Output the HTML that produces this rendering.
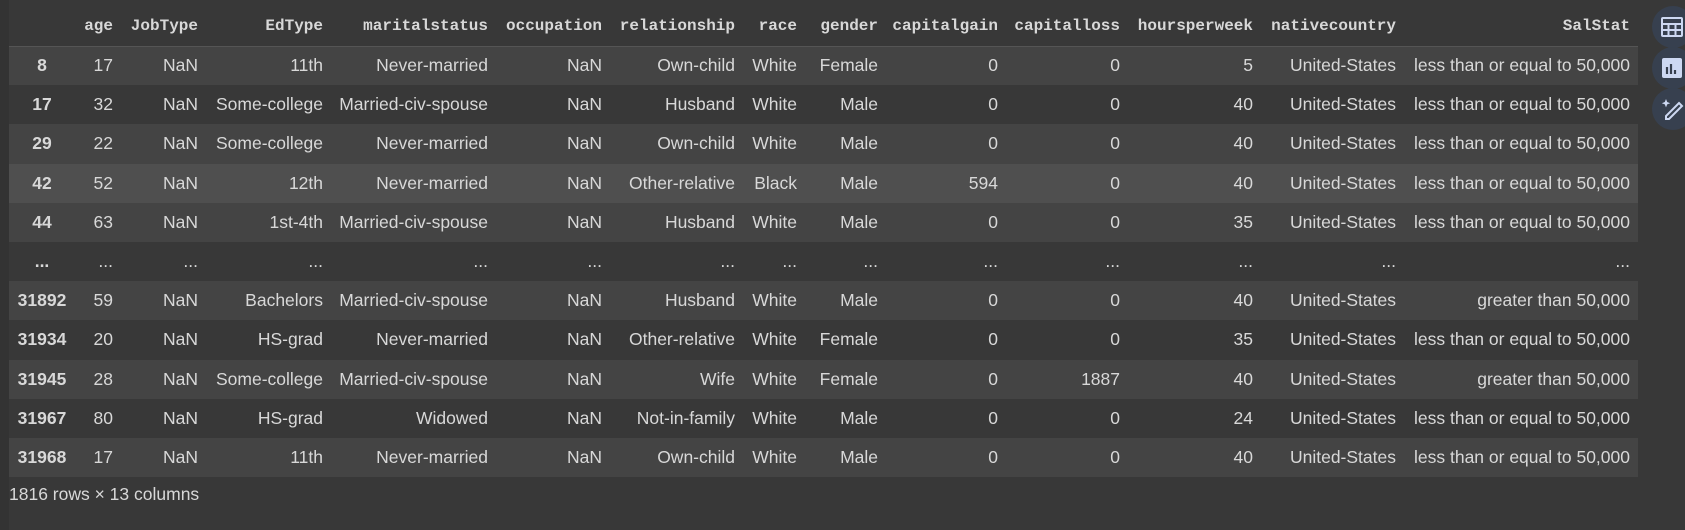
<!DOCTYPE html>
<html><head><meta charset="utf-8"><style>
html,body{margin:0;padding:0;background:#383838;width:1685px;height:530px;overflow:hidden;position:relative}
.strip{position:absolute;left:0;top:0;width:9px;height:530px;background:#333}
table{position:absolute;left:9px;top:0;border-collapse:collapse;table-layout:fixed;width:1629px;font-family:"Liberation Sans",Arial,sans-serif;font-size:17.5px;color:#d8d8d8}
th,td{padding:0 6px 0 0;text-align:right;white-space:nowrap;overflow:visible}
thead th{height:46px;box-sizing:border-box;padding-top:6px;border-bottom:1px solid #555;font-family:"Liberation Mono",monospace;font-size:16px;font-weight:bold;color:#d8d8d8;vertical-align:middle}
tbody tr{height:39.2px}
tbody th{text-align:center;padding:0;font-weight:bold}
tbody tr:nth-child(odd){background:#444}
tbody tr.hov{background:#4f4f4f}
.foot{position:absolute;left:9px;top:484px;font-family:"Liberation Sans",Arial,sans-serif;font-size:17.5px;color:#d8d8d8}
.ic{position:absolute;left:1652px;width:42px;height:42px;border-radius:50%;background:#37404f}
.ic svg{position:absolute;left:7px;top:9px}
</style></head><body>
<div class="strip"></div>
<table>
<colgroup><col style="width:66px"><col style="width:44px"><col style="width:85px"><col style="width:125px"><col style="width:165px"><col style="width:114px"><col style="width:133px"><col style="width:62px"><col style="width:81px"><col style="width:120px"><col style="width:122px"><col style="width:133px"><col style="width:143px"><col style="width:236px"></colgroup>
<thead><tr><th></th><th>age</th><th>JobType</th><th>EdType</th><th>maritalstatus</th><th>occupation</th><th>relationship</th><th>race</th><th>gender</th><th>capitalgain</th><th>capitalloss</th><th>hoursperweek</th><th>nativecountry</th><th style="padding-right:8px">SalStat</th></tr></thead>
<tbody>
<tr><th>8</th><td>17</td><td>NaN</td><td>11th</td><td>Never-married</td><td>NaN</td><td>Own-child</td><td>White</td><td>Female</td><td>0</td><td>0</td><td>5</td><td>United-States</td><td style="padding-right:8px">less than or equal to 50,000</td></tr>
<tr><th>17</th><td>32</td><td>NaN</td><td>Some-college</td><td>Married-civ-spouse</td><td>NaN</td><td>Husband</td><td>White</td><td>Male</td><td>0</td><td>0</td><td>40</td><td>United-States</td><td style="padding-right:8px">less than or equal to 50,000</td></tr>
<tr><th>29</th><td>22</td><td>NaN</td><td>Some-college</td><td>Never-married</td><td>NaN</td><td>Own-child</td><td>White</td><td>Male</td><td>0</td><td>0</td><td>40</td><td>United-States</td><td style="padding-right:8px">less than or equal to 50,000</td></tr>
<tr class="hov"><th>42</th><td>52</td><td>NaN</td><td>12th</td><td>Never-married</td><td>NaN</td><td>Other-relative</td><td>Black</td><td>Male</td><td>594</td><td>0</td><td>40</td><td>United-States</td><td style="padding-right:8px">less than or equal to 50,000</td></tr>
<tr><th>44</th><td>63</td><td>NaN</td><td>1st-4th</td><td>Married-civ-spouse</td><td>NaN</td><td>Husband</td><td>White</td><td>Male</td><td>0</td><td>0</td><td>35</td><td>United-States</td><td style="padding-right:8px">less than or equal to 50,000</td></tr>
<tr><th>...</th><td>...</td><td>...</td><td>...</td><td>...</td><td>...</td><td>...</td><td>...</td><td>...</td><td>...</td><td>...</td><td>...</td><td>...</td><td style="padding-right:8px">...</td></tr>
<tr><th>31892</th><td>59</td><td>NaN</td><td>Bachelors</td><td>Married-civ-spouse</td><td>NaN</td><td>Husband</td><td>White</td><td>Male</td><td>0</td><td>0</td><td>40</td><td>United-States</td><td style="padding-right:8px">greater than 50,000</td></tr>
<tr><th>31934</th><td>20</td><td>NaN</td><td>HS-grad</td><td>Never-married</td><td>NaN</td><td>Other-relative</td><td>White</td><td>Female</td><td>0</td><td>0</td><td>35</td><td>United-States</td><td style="padding-right:8px">less than or equal to 50,000</td></tr>
<tr><th>31945</th><td>28</td><td>NaN</td><td>Some-college</td><td>Married-civ-spouse</td><td>NaN</td><td>Wife</td><td>White</td><td>Female</td><td>0</td><td>1887</td><td>40</td><td>United-States</td><td style="padding-right:8px">greater than 50,000</td></tr>
<tr><th>31967</th><td>80</td><td>NaN</td><td>HS-grad</td><td>Widowed</td><td>NaN</td><td>Not-in-family</td><td>White</td><td>Male</td><td>0</td><td>0</td><td>24</td><td>United-States</td><td style="padding-right:8px">less than or equal to 50,000</td></tr>
<tr><th>31968</th><td>17</td><td>NaN</td><td>11th</td><td>Never-married</td><td>NaN</td><td>Own-child</td><td>White</td><td>Male</td><td>0</td><td>0</td><td>40</td><td>United-States</td><td style="padding-right:8px">less than or equal to 50,000</td></tr>
</tbody></table>
<div class="foot">1816 rows × 13 columns</div>
<div class="ic" style="top:6px"><svg width="26" height="24" viewBox="0 0 24 24" fill="none" stroke="#cdd8f2" stroke-width="2"><rect x="2" y="3" width="20" height="18" rx="1"/><path d="M2 9h20M2 15h20M8.5 9v12M15.5 9v12"/></svg></div>
<div class="ic" style="top:47px"><svg width="26" height="24" viewBox="0 0 24 24"><rect x="2" y="2" width="20" height="20" rx="2" fill="#cdd8f2"/><path d="M7 11v7M11 8v10M15 14v4" stroke="#37404f" stroke-width="2.2"/></svg></div>
<div class="ic" style="top:88px"><svg width="26" height="24" viewBox="0 0 24 24" fill="none" stroke="#cdd8f2" stroke-width="2"><path d="M6 2l1.2 3 3 1.2-3 1.2L6 10.4 4.8 7.4 1.8 6.2l3-1.2z" fill="#cdd8f2" stroke="none"/><path d="M19 6l3 3L9 22H6v-3z"/></svg></div>
</body></html>
